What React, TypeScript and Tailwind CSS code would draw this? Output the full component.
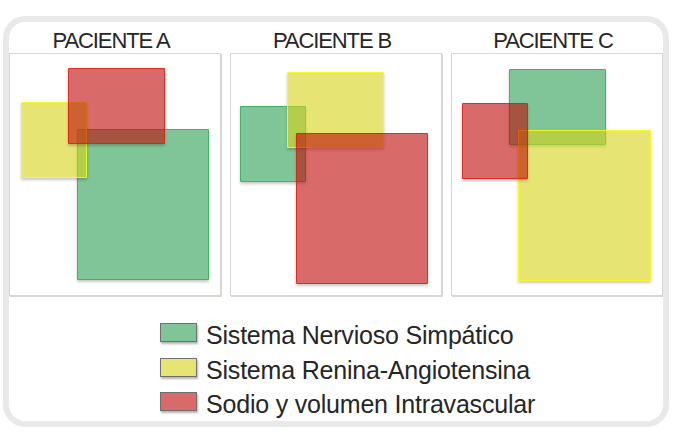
import type { CSSProperties } from "react"

type Shape = "green" | "yellow" | "red"

// translucent fills, layered green -> yellow -> red
const SHAPE_CLASS: Record<Shape, string> = {
  green: "bg-[rgba(42,158,83,0.6)] border-[rgba(40,175,85,0.75)]",
  yellow: "bg-[rgba(213,212,23,0.6)] border-[rgba(255,255,20,0.8)]",
  red: "bg-[rgba(190,8,7,0.6)] border-[rgba(225,30,20,0.8)]",
}

type Rect = { color: Shape; x: number; y: number; w: number; h: number }

const PATIENTS: { label: string; rects: Rect[] }[] = [
  {
    label: "PACIENTE A",
    rects: [
      { color: "green", x: 67, y: 75, w: 132, h: 151 },
      { color: "yellow", x: 11, y: 48, w: 66, h: 76 },
      { color: "red", x: 57.5, y: 14, w: 97, h: 76 },
    ],
  },
  {
    label: "PACIENTE B",
    rects: [
      { color: "green", x: 9, y: 52, w: 66, h: 76 },
      { color: "yellow", x: 56, y: 17.5, w: 97, h: 76 },
      { color: "red", x: 65, y: 79, w: 132, h: 151 },
    ],
  },
  {
    label: "PACIENTE C",
    rects: [
      { color: "green", x: 57, y: 15, w: 97, h: 76 },
      { color: "yellow", x: 66, y: 76, w: 133, h: 151 },
      { color: "red", x: 10, y: 49, w: 66, h: 76 },
    ],
  },
]

const LEGEND: { color: string; text: string }[] = [
  { color: "bg-[#7fc598]", text: "Sistema Nervioso Simpático" },
  { color: "bg-[#e6e574]", text: "Sistema Renina-Angiotensina" },
  { color: "bg-[#d86b6a]", text: "Sodio y volumen Intravascular" },
]

function PatientBox({ rects }: { rects: Rect[] }) {
  return (
    <div className="relative h-[243px] border border-[#d8d6d0] bg-white shadow-[1px_1px_0_#d9d7d1]">
      {rects.map((r, i) => {
        const style: CSSProperties = { left: r.x, top: r.y, width: r.w, height: r.h }
        return (
          <div
            key={i}
            style={style}
            className={`absolute border rounded-[1px] shadow-[0_2px_3px_rgba(0,0,0,0.22)] ${SHAPE_CLASS[r.color]}`}
          />
        )
      })}
    </div>
  )
}

export default function App() {
  return (
    <div className="min-h-[438px] w-[684px] bg-white pl-[3px] pt-[16px] font-['Liberation_Sans',Arial,sans-serif] text-[#262626]">
      <div className="h-[411px] w-[666px] overflow-hidden rounded-[22px] border-[6px] border-[#e9e9e9] bg-white">
        <div className="grid h-[31px] grid-cols-3 gap-[9px] pt-[8px]">
          {PATIENTS.map((p) => (
            <div
              key={p.label}
              className="pr-[8px] text-center text-[22px] leading-[22px] tracking-[-1.1px]"
            >
              {p.label}
            </div>
          ))}
        </div>

        <div className="grid grid-cols-3 gap-[9px]">
          {PATIENTS.map((p) => (
            <PatientBox key={p.label} rects={p.rects} />
          ))}
        </div>

        <div className="ml-[151px] mt-[22px] flex flex-col">
          {LEGEND.map((l) => (
            <div key={l.text} className="flex items-start gap-[9px]">
              <div
                className={`mt-[5px] h-[19px] w-[37px] shrink-0 border border-[#6f6f6f] shadow-[1px_2px_2px_rgba(0,0,0,0.3)] ${l.color}`}
              />
              <span className="text-[25px] leading-[34.6px] tracking-[-0.2px]">
                {l.text}
              </span>
            </div>
          ))}
        </div>
      </div>
    </div>
  )
}
